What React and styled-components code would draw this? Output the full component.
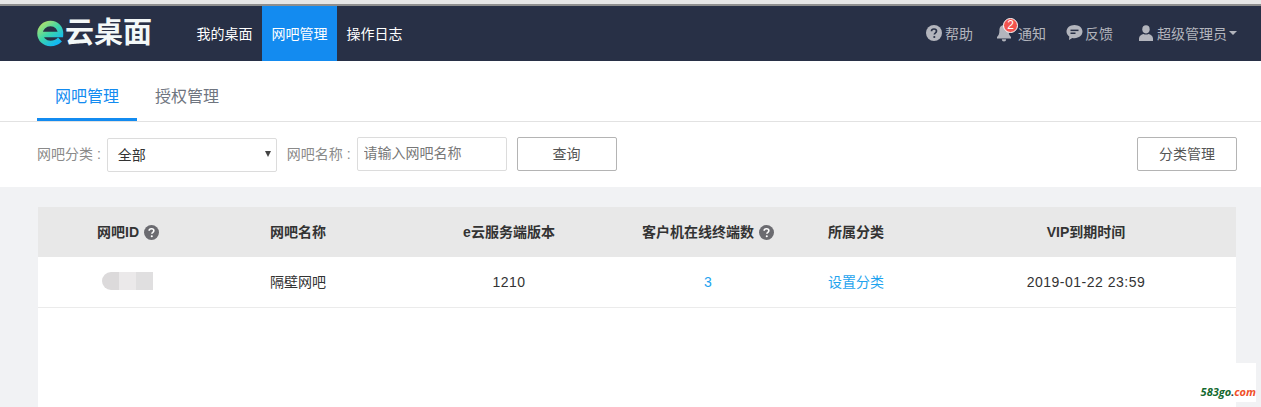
import React from "react";
import styled, { createGlobalStyle } from "styled-components";

const GlobalStyle = createGlobalStyle`
  html, body {
    margin: 0;
    padding: 0;
    height: 100%;
    overflow: hidden;
    background: #f1f2f4;
    font-family: "Liberation Sans", "Noto Sans CJK SC", sans-serif;
    font-size: 14px;
    color: #333;
  }
  * { box-sizing: border-box; }
`;

const Page = styled.div`
  position: relative;
  width: 1261px;
  height: 407px;
  overflow: hidden;
`;

const BrowserEdge = styled.div`
  height: 6px;
  background: #e6e6e6;
  border-bottom: 2px solid #8e8e8e;
`;

const Header = styled.header`
  height: 55px;
  background: #283046;
  display: flex;
  align-items: stretch;
  padding: 0 24px 0 37px;
`;

const Logo = styled.div`
  width: 150px;
  display: flex;
  align-items: center;
  gap: 1px;
  padding-bottom: 1px;
`;

const LogoText = styled.span`
  color: #f3f8f8;
  font-size: 29px;
  font-weight: 700;
  line-height: 1;
`;

const Nav = styled.nav`
  display: flex;
`;

const NavItem = styled.a`
  display: flex;
  align-items: center;
  justify-content: center;
  width: ${(p) => p.$width}px;
  padding-bottom: 2px;
  color: #fff;
  background: ${(p) => (p.$active ? "#138bf0" : "transparent")};
  font-size: 14px;
`;

const HeaderRight = styled.div`
  margin-left: auto;
  display: flex;
  align-items: center;
  padding-bottom: 2px;
`;

const ToolItem = styled.span`
  position: relative;
  display: flex;
  align-items: center;
  gap: ${(p) => p.$inner || 3}px;
  margin-left: ${(p) => p.$gap}px;
  color: #b3b5bd;
  font-size: 14px;
`;

const Badge = styled.span`
  position: absolute;
  left: 7px;
  top: -5px;
  width: 15px;
  height: 15px;
  border-radius: 50%;
  border: 1px solid #fff;
  background: #f2544f;
  color: #fff;
  font-size: 12px;
  line-height: 13px;
  text-align: center;
`;

const Caret = styled.i`
  width: 0;
  height: 0;
  margin-left: -1px;
  border-left: 4px solid transparent;
  border-right: 4px solid transparent;
  border-top: 4px solid #b3b5bd;
`;

const Tabs = styled.div`
  height: 61px;
  background: #fff;
  border-bottom: 1px solid #e2e2e2;
  display: flex;
  padding-left: 37px;
`;

const Tab = styled.a`
  width: ${(p) => p.$width}px;
  height: 60px;
  display: flex;
  align-items: center;
  justify-content: center;
  margin-right: ${(p) => p.$gap || 0}px;
  font-size: 16px;
  color: ${(p) => (p.$active ? "#138bf0" : "#6f7580")};
  border-bottom: 3px solid ${(p) => (p.$active ? "#138bf0" : "transparent")};
  padding-top: 11px;
`;

const Filters = styled.div`
  height: 65px;
  background: #fff;
  display: flex;
  align-items: center;
  padding: 0 24px 1px 37px;
`;

const Label = styled.label`
  color: #8a8a8a;
  font-size: 14px;
  margin: 0 ${(p) => p.$gap}px 3px 0;
  white-space: pre;
`;

const SelectBox = styled.div`
  width: 170px;
  height: 34px;
  margin-top: 2px;
  margin-right: 10px;
  border: 1px solid #dcdcdc;
  border-radius: 2px;
  display: flex;
  align-items: center;
  justify-content: space-between;
  padding: 0 5px 2px 10px;
  color: #333;
  font-size: 14px;
`;

const SelectArrow = styled.i`
  width: 0;
  height: 0;
  border-left: 3px solid transparent;
  border-right: 3px solid transparent;
  border-top: 6px solid #444;
`;

const SearchInput = styled.input`
  width: 150px;
  height: 34px;
  border: 1px solid #dcdcdc;
  border-radius: 2px;
  padding: 0 6px 2px;
  margin-right: 10px;
  font: inherit;
  font-size: 14px;
  outline: none;
  &::placeholder {
    color: #777;
    opacity: 1;
  }
`;

const Button = styled.button`
  width: ${(p) => p.$width}px;
  height: 34px;
  margin-left: ${(p) => (p.$push ? "auto" : "0")};
  background: #fff;
  border: 1px solid #b4b4b4;
  border-radius: 2px;
  color: #555;
  font: inherit;
  font-size: 14px;
  padding: 0 0 2px;
`;

const Content = styled.main`
  padding: 20px 25px 0 38px;
`;

const Table = styled.div`
  background: #fff;
  height: 220px;
`;

const Row = styled.div`
  display: grid;
  grid-template-columns: 180px 160px 262px 136px 160px 300px;
  height: ${(p) => (p.$head ? 50 : 51)}px;
  padding-bottom: ${(p) => (p.$head ? 2 : 0)}px;
  background: ${(p) => (p.$head ? "#e8e8e8" : "#fff")};
  border-bottom: ${(p) => (p.$head ? "none" : "1px solid #ebebeb")};
`;

const Cell = styled.div`
  display: flex;
  align-items: center;
  justify-content: center;
  gap: 5px;
  padding-bottom: ${(p) => (p.$cjk ? 2 : 0)}px;
  white-space: nowrap;
  font-size: 14px;
  letter-spacing: ${(p) => (p.$wide ? "0.5px" : "0")};
  font-weight: ${(p) => (p.$head ? 700 : 400)};
  color: ${(p) => (p.$link ? "#1ea3ee" : "#333")};
`;

const HeadHelp = styled.span`
  display: flex;
  margin-top: 3px;
`;

const Blurred = styled.div`
  display: flex;
  width: 51px;
  height: 18px;
  margin-top: -3px;
  margin-left: -1px;
  overflow: hidden;
  border-radius: 9px 0 0 9px;
`;

const BlurPart = styled.span`
  width: 17px;
  background: ${(p) => p.$color};
`;

const Watermark = styled.div`
  position: absolute;
  right: 5px;
  bottom: 5px;
  width: 59px;
  height: 39px;
  padding-bottom: 5px;
  background: #fff;
  display: flex;
  align-items: flex-end;
  justify-content: flex-end;
  font-family: "Open Sans", sans-serif;
  font-size: 11px;
  font-weight: 700;
  font-style: italic;
  color: #14692f;
  line-height: 1;
`;

const Dot = styled.span`
  color: #333;
`;

const Com = styled.span`
  color: #f0502a;
`;

const HelpIcon = ({ size = 16, color = "#b3b5bd" }) => (
  <svg width={size} height={size} viewBox="0 0 16 16">
    <circle cx="8" cy="8" r="8" fill={color} />
    <path
      d="M5.5 6.2C5.5 4.8 6.6 4 8 4s2.5.8 2.5 2.1c0 1-.6 1.5-1.3 2-.6.4-.8.7-.8 1.3"
      fill="none"
      stroke={color === "#b3b5bd" ? "#283046" : "#fff"}
      strokeWidth="1.7"
    />
    <circle cx="8.3" cy="12" r="1.1" fill={color === "#b3b5bd" ? "#283046" : "#fff"} />
  </svg>
);

const BellIcon = () => (
  <svg width="16" height="18" viewBox="0 0 16 18">
    <path d="M8 1c3 0 4.600 2.400 4.600 5.400 0 3.400.8 5 2.400 6.600v1.500H1V13c1.600-1.600 2.400-3.200 2.400-6.600C3.400 3.400 5 1 8 1z" fill="#b3b5bd" />
    <path d="M5.800 15.200h4.400a2.200 2.200 0 0 1-4.400 0z" fill="#b3b5bd" />
  </svg>
);

const ChatIcon = () => (
  <svg width="17" height="17" viewBox="0 0 17 17">
    <path d="M8.500 1C13 1 16.500 3.800 16.500 7.600s-3.500 6.600-8 6.600c-.8 0-1.500-.1-2.200-.3L3 16l.3-3.500C1.600 11.300.5 9.600.5 7.600.5 3.800 4 1 8.500 1z" fill="#b3b5bd" />
    <rect x="4.500" y="5.600" width="8" height="1.500" fill="#283046" />
    <rect x="4.500" y="8.500" width="5" height="1.500" fill="#283046" />
  </svg>
);

const UserIcon = () => (
  <svg width="16" height="16" viewBox="0 0 16 16">
    <ellipse cx="8" cy="4.300" rx="3.700" ry="4.100" fill="#b3b5bd" />
    <path d="M1 16v-2.600c0-2.500 2.400-3.900 4.500-4.400 1.500.8 3.500.8 5 0 2.100.5 4.500 1.900 4.500 4.400V16z" fill="#b3b5bd" />
  </svg>
);

const LogoMark = () => (
  <svg width="27" height="27" viewBox="0 0 27 27">
    <defs>
      <linearGradient id="logoE" x1="0" y1="0" x2="0.8" y2="1">
        <stop offset="0" stopColor="#b4e06a" />
        <stop offset="0.5" stopColor="#3fd6a8" />
        <stop offset="1" stopColor="#12b8f2" />
      </linearGradient>
    </defs>
    <path
      d="M3 14.500h20.500C24 8 19.500 3.500 13.500 3.500 7.500 3.500 3 8 3 13.500s4.500 10 10.500 10c3.600 0 7-1.500 9.500-4"
      fill="none"
      stroke="url(#logoE)"
      strokeWidth="5.500"
    />
  </svg>
);

const App = () => {
  return (
    <Page>
      <GlobalStyle />
      <BrowserEdge />
      <Header>
        <Logo>
          <LogoMark />
          <LogoText>云桌面</LogoText>
        </Logo>
        <Nav>
          <NavItem $width={75}>我的桌面</NavItem>
          <NavItem $width={75} $active>网吧管理</NavItem>
          <NavItem $width={75}>操作日志</NavItem>
        </Nav>
        <HeaderRight>
          <ToolItem $gap={0}>
            <HelpIcon />
            帮助
          </ToolItem>
          <ToolItem $gap={23} $inner={6}>
            <BellIcon />
            <Badge>2</Badge>
            通知
          </ToolItem>
          <ToolItem $gap={20} $inner={2}>
            <ChatIcon />
            反馈
          </ToolItem>
          <ToolItem $gap={25}>
            <UserIcon />
            超级管理员
            <Caret />
          </ToolItem>
        </HeaderRight>
      </Header>
      <Tabs>
        <Tab $width={100} $gap={18} $active>网吧管理</Tab>
        <Tab $width={64}>授权管理</Tab>
      </Tabs>
      <Filters>
        <Label $gap={6}>网吧分类 :</Label>
        <SelectBox>
          全部
          <SelectArrow />
        </SelectBox>
        <Label $gap={6}>网吧名称 :</Label>
        <SearchInput placeholder="请输入网吧名称" />
        <Button $width={100}>查询</Button>
        <Button $width={100} $push>分类管理</Button>
      </Filters>
      <Content>
        <Table>
          <Row $head>
            <Cell $head>
              网吧ID
              <HeadHelp>
                <HelpIcon size={15} color="#6b6b70" />
              </HeadHelp>
            </Cell>
            <Cell $head>网吧名称</Cell>
            <Cell $head>e云服务端版本</Cell>
            <Cell $head>
              客户机在线终端数
              <HeadHelp>
                <HelpIcon size={15} color="#6b6b70" />
              </HeadHelp>
            </Cell>
            <Cell $head>所属分类</Cell>
            <Cell $head>VIP到期时间</Cell>
          </Row>
          <Row>
            <Cell>
              <Blurred>
                <BlurPart $color="#dcdadb" />
                <BlurPart $color="#ebe9ea" />
                <BlurPart $color="#e0dfe0" />
              </Blurred>
            </Cell>
            <Cell $cjk>隔壁网吧</Cell>
            <Cell $wide>1210</Cell>
            <Cell $link>3</Cell>
            <Cell $link $cjk>设置分类</Cell>
            <Cell $wide>2019-01-22 23:59</Cell>
          </Row>
        </Table>
      </Content>
      <Watermark>
        583go<Dot>.</Dot>
        <Com>com</Com>
      </Watermark>
    </Page>
  );
};

export default App;
